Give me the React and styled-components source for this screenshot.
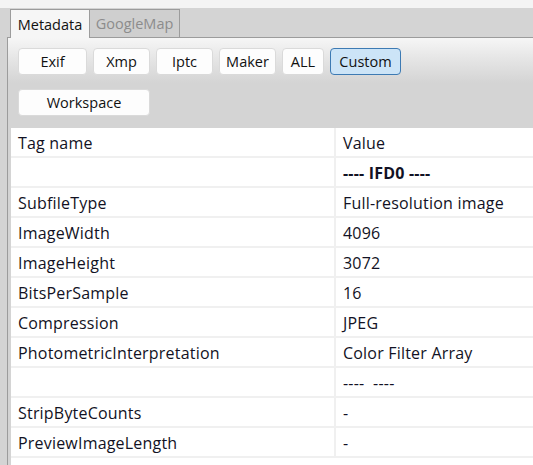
import React from 'react';
import styled, { createGlobalStyle } from 'styled-components';

const GlobalStyle = createGlobalStyle`
  html, body {
    margin: 0;
    padding: 0;
    background: #d4d4d4;
    overflow: hidden;
  }
`;

const Window = styled.div`
  width: 533px;
  height: 465px;
  overflow: hidden;
  background: #d4d4d4;
  display: flex;
  flex-direction: column;
`;
const TopStrip = styled.div`
  height: 8px;
  background: #f4f4f4;
  flex: none;
`;
const Body = styled.div`
  flex: 1;
  display: flex;
  padding-left: 7px;
  min-height: 0;
`;
const TabWidget = styled.div`
  flex: 1;
  display: flex;
  flex-direction: column;
  min-width: 0;
`;
const TabBar = styled.div`
  height: 29px;
  display: flex;
  align-items: flex-end;
  padding-left: 3px;
  border-bottom: 1px solid #9c9c9c;
  flex: none;
`;
const Tab = styled.div`
  box-sizing: border-box;
  width: ${(p) => p.$w}px;
  display: flex;
  align-items: center;
  justify-content: center;
  font-family: 'Open Sans', 'Segoe UI', sans-serif;
  font-size: 14.5px;
  border: 1px solid #9c9c9c;
  border-bottom: none;
  margin-bottom: ${(p) => (p.$active ? '-1px' : '0')};
  height: ${(p) => (p.$active ? '29px' : '28px')};
  background: ${(p) => (p.$active ? '#f6f6f6' : '#cfcfcf')};
  color: ${(p) => (p.$active ? '#111' : '#8c8c8c')};
  & + & {
    border-left: none;
  }
`;
const Pane = styled.div`
  flex: 1;
  border-left: 1px solid #9c9c9c;
  background: linear-gradient(#f6f6f6 0px, #e6e6e6 20px, #d4d4d4 45px, #d4d4d4 100%);
  display: flex;
  flex-direction: column;
  padding: 10px 0 0 3px;
  min-height: 0;
`;
const ButtonRow = styled.div`
  display: flex;
  gap: 6px;
  padding-left: 7px;
  margin-bottom: ${(p) => p.$gap || 0}px;
`;
const Button = styled.div`
  width: ${(p) => p.$w}px;
  height: 27px;
  box-sizing: border-box;
  display: flex;
  align-items: center;
  justify-content: center;
  font-family: 'Open Sans', 'Segoe UI', sans-serif;
  font-size: 14.5px;
  color: #111;
  border-radius: 4px;
  background: ${(p) => (p.$on ? '#cce4f7' : '#fdfdfd')};
  border: 1px solid ${(p) => (p.$on ? '#3d7ab3' : '#dadada')};
`;
const Table = styled.div`
  margin-top: 12px;
  background: #ffffff;
  flex: 1;
  display: flex;
  flex-direction: column;
`;
const Row = styled.div`
  display: grid;
  grid-template-columns: 323px 1fr;
  height: 30px;
  box-sizing: border-box;
  border-bottom: 2px solid #f0f0f0;
  flex: none;
`;
const Cell = styled.div`
  display: flex;
  align-items: center;
  padding: 1px 0 0 7px;
  font-family: 'Open Sans', 'Segoe UI', sans-serif;
  font-size: 16px;
  letter-spacing: 0.2px;
  color: #121224;
  font-weight: ${(p) => (p.$bold ? 700 : 400)};
  white-space: pre;
  & + & {
    border-left: 2px solid #f0f0f0;
  }
`;

const rows = [
  ['Tag name', 'Value'],
  ['', '---- IFD0 ----', true],
  ['SubfileType', 'Full-resolution image'],
  ['ImageWidth', '4096'],
  ['ImageHeight', '3072'],
  ['BitsPerSample', '16'],
  ['Compression', 'JPEG'],
  ['PhotometricInterpretation', 'Color Filter Array'],
  ['', '----  ----'],
  ['StripByteCounts', '-'],
  ['PreviewImageLength', '-'],
];

const buttons = [
  ['Exif', 69],
  ['Xmp', 57],
  ['Iptc', 57],
  ['Maker', 57],
  ['ALL', 42],
  ['Custom', 71, true],
];

function App() {
  return (
    <>
      <GlobalStyle />
      <Window>
        <TopStrip />
        <Body>
          <TabWidget>
            <TabBar>
              <Tab $active $w={80}>Metadata</Tab>
              <Tab $w={90}>GoogleMap</Tab>
            </TabBar>
            <Pane>
              <ButtonRow $gap={14}>
                {buttons.map(([label, w, on]) => (
                  <Button key={label} $w={w} $on={on}>
                    {label}
                  </Button>
                ))}
              </ButtonRow>
              <ButtonRow>
                <Button $w={132}>Workspace</Button>
              </ButtonRow>
              <Table>
                {rows.map(([name, value, bold], i) => (
                  <Row key={i}>
                    <Cell>{name}</Cell>
                    <Cell $bold={bold}>{value}</Cell>
                  </Row>
                ))}
              </Table>
            </Pane>
          </TabWidget>
        </Body>
      </Window>
    </>
  );
}

export default App;
